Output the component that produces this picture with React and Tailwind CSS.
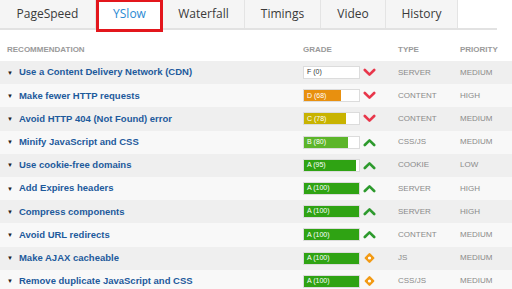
import React from 'react';

const tabs = [
  { name: 'PageSpeed', w: 'w-[96px]' },
  { name: 'YSlow', w: 'w-[67px]', active: true },
  { name: 'Waterfall', w: 'w-[82px]' },
  { name: 'Timings', w: 'w-[76px]' },
  { name: 'Video', w: 'w-[65px]' },
  { name: 'History', w: 'w-[72px]' },
];

const rows = [
  { title: 'Use a Content Delivery Network (CDN)', grade: 'F (0)', pct: 0, color: 'bg-transparent', icon: 'down', type: 'SERVER', priority: 'MEDIUM' },
  { title: 'Make fewer HTTP requests', grade: 'D (68)', pct: 68, color: 'bg-[#e8900f]', icon: 'down', type: 'CONTENT', priority: 'HIGH' },
  { title: 'Avoid HTTP 404 (Not Found) error', grade: 'C (78)', pct: 76, color: 'bg-[#c8b300]', icon: 'down', type: 'CONTENT', priority: 'MEDIUM' },
  { title: 'Minify JavaScript and CSS', grade: 'B (80)', pct: 80, color: 'bg-[#5cb52a]', icon: 'up', type: 'CSS/JS', priority: 'MEDIUM' },
  { title: 'Use cookie-free domains', grade: 'A (95)', pct: 95, color: 'bg-[#2fa313]', icon: 'up', type: 'COOKIE', priority: 'LOW' },
  { title: 'Add Expires headers', grade: 'A (100)', pct: 100, color: 'bg-[#2fa313]', icon: 'up', type: 'SERVER', priority: 'HIGH' },
  { title: 'Compress components', grade: 'A (100)', pct: 100, color: 'bg-[#2fa313]', icon: 'up', type: 'SERVER', priority: 'HIGH' },
  { title: 'Avoid URL redirects', grade: 'A (100)', pct: 100, color: 'bg-[#2fa313]', icon: 'up', type: 'CONTENT', priority: 'MEDIUM' },
  { title: 'Make AJAX cacheable', grade: 'A (100)', pct: 100, color: 'bg-[#2fa313]', icon: 'dot', type: 'JS', priority: 'MEDIUM' },
  { title: 'Remove duplicate JavaScript and CSS', grade: 'A (100)', pct: 100, color: 'bg-[#2fa313]', icon: 'dot', type: 'CSS/JS', priority: 'MEDIUM' },
];

const StatusIcon = ({ kind }) => {
  if (kind === 'down') {
    return (
      <svg width="13" height="9" viewBox="0 0 13 9">
        <path d="M1.8 2 L6.5 6.6 L11.2 2" fill="none" stroke="#e8364a" strokeWidth="2.6" strokeLinecap="round" strokeLinejoin="round" />
      </svg>
    );
  }
  if (kind === 'up') {
    return (
      <svg width="13" height="9" viewBox="0 0 13 9">
        <path d="M1.8 7 L6.5 2.4 L11.2 7" fill="none" stroke="#2d9a2d" strokeWidth="2.6" strokeLinecap="round" strokeLinejoin="round" />
      </svg>
    );
  }
  return (
    <svg width="13" height="12" viewBox="0 0 13 12">
      <rect x="2.7" y="2.2" width="7.6" height="7.6" rx="1.2" fill="#f29a14" transform="rotate(45 6.5 6)" />
      <circle cx="6.5" cy="6" r="1.6" fill="#ffffff" />
    </svg>
  );
};

export default function App() {
  return (
    <div className="w-[512px] h-[289px] overflow-hidden bg-white font-['Liberation_Sans',Arial,sans-serif]">
      {/* Tabs */}
      <div className="flex w-[497px] h-[30px] border-b-2 border-[#e2e2e2]">
        {tabs.map((t) =>
          t.active ? (
            <div key={t.name} className={`${t.w} h-[33px] -mt-px border-[3px] border-[#e3161c] bg-white flex items-center justify-center pb-[3px] text-[12px] text-[#2b8ad3] font-['Open_Sans',sans-serif] z-10`}>
              {t.name}
            </div>
          ) : (
            <div key={t.name} className={`${t.w} h-[28px] bg-[#f5f5f5] border-r border-[#e4e4e4] flex items-center justify-center text-[12px] text-[#3a3a3a] font-['Open_Sans',sans-serif]`}>
              {t.name}
            </div>
          )
        )}
      </div>

      {/* Header */}
      <div className="flex items-center h-[31px] pt-[8px] text-[8px] font-bold text-[#9a9a9a]">
        <div className="w-[303px] pl-[7px]">RECOMMENDATION</div>
        <div className="w-[95px]">GRADE</div>
        <div className="w-[62px]">TYPE</div>
        <div>PRIORITY</div>
      </div>

      {/* Rows */}
      <div className="flex flex-col">
        {rows.map((r, i) => (
          <div key={r.title} className={`flex items-center h-[23.2px] shrink-0 ${i % 2 === 0 ? 'bg-[#efefef]' : 'bg-[#f8f8f8]'}`}>
            <div className="w-[303px] flex items-center pl-[7px]">
              <span className="text-[6px] text-[#222] mr-[6px] leading-none">▼</span>
              <span className="text-[9.5px] font-bold text-[#1d5a9c]">{r.title}</span>
            </div>
            <div className="w-[95px] flex items-center">
              <div className="w-[57px] h-[13px] bg-white border border-[#dcdcdc] flex">
                <div className={`${r.color} h-full flex items-center pl-[3px] text-[7px] whitespace-nowrap ${r.pct === 0 ? 'text-[#333]' : 'text-white'}`} style={{ width: r.pct === 0 ? '100%' : `${r.pct}%` }}>
                  {r.grade}
                </div>
              </div>
              <div className="ml-[3px] flex items-center">
                <StatusIcon kind={r.icon} />
              </div>
            </div>
            <div className="w-[62px] text-[8px] text-[#8a8a8a]">{r.type}</div>
            <div className="text-[8px] text-[#8a8a8a]">{r.priority}</div>
          </div>
        ))}
      </div>
    </div>
  );
}
